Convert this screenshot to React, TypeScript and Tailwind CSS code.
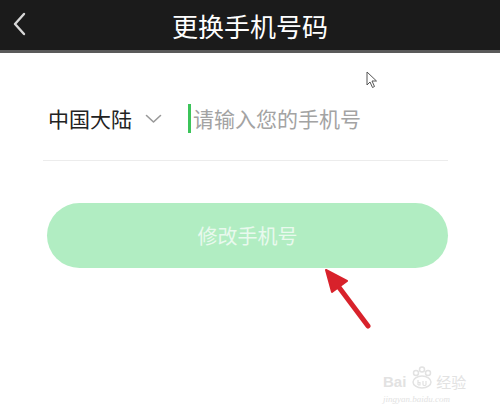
import React from "react"

const cjk = { fontFamily: '"Noto Sans CJK SC", "Noto Sans", sans-serif' }

function BackIcon() {
    return (
        <svg width="14" height="24" viewBox="0 0 14 24" fill="none">
            <path d="M12 2 L3 12 L12 22" stroke="#d8d8d8" strokeWidth="2.4" strokeLinecap="round" strokeLinejoin="round" />
        </svg>
    )
}

function Chevron() {
    return (
        <svg width="17" height="10" viewBox="0 0 17 10" fill="none">
            <path d="M1.5 1.5 L8.5 8 L15.5 1.5" stroke="#999" strokeWidth="1.6" strokeLinecap="round" strokeLinejoin="round" />
        </svg>
    )
}

function MousePointer() {
    return (
        <svg width="12" height="18" viewBox="0 0 12 18" fill="none">
            <path d="M1 1 L1 14 L4 11 L6.5 16.5 L8.5 15.5 L6 10 L10.5 10 Z" fill="#fff" stroke="#555" strokeWidth="1" strokeLinejoin="round" />
        </svg>
    )
}

function RedArrow() {
    return (
        <svg width="60" height="70" viewBox="0 0 60 70" fill="none">
            <line x1="13" y1="14" x2="46" y2="58" stroke="#d8222b" strokeWidth="5" strokeLinecap="round" />
            <path d="M4 2 L25 13 L10 24 Z" fill="#d8222b" stroke="#d8222b" strokeWidth="2" strokeLinejoin="round" />
        </svg>
    )
}

// faint baidu watermark, bottom right
function Watermark() {
    return (
        <div className="absolute left-[383px] top-[366px] w-[88px] flex flex-col text-[#e2e2e2] select-none">
            <div className="flex items-end h-[23px]">
                <span className="text-[15px] font-bold leading-none" style={{ fontFamily: '"Liberation Sans", sans-serif' }}>Bai</span>
                <svg width="26" height="23" viewBox="0 0 26 23" className="ml-[3px]">
                    <circle cx="7" cy="7" r="2.5" fill="none" stroke="#e2e2e2" strokeWidth="1.5" />
                    <circle cx="13" cy="3.5" r="2.5" fill="none" stroke="#e2e2e2" strokeWidth="1.5" />
                    <circle cx="19" cy="7" r="2.5" fill="none" stroke="#e2e2e2" strokeWidth="1.5" />
                    <ellipse cx="13" cy="16" rx="9" ry="6" fill="none" stroke="#e2e2e2" strokeWidth="1.5" />
                    <path d="M9 14 v5 M9 16.5 h2 v2.5 h-2 M14 15 v3.5 q0 1 1.5 1 q1.5 0 1.5 -1 v-3.5" fill="none" stroke="#e2e2e2" strokeWidth="1.2" />
                </svg>
                <span className="ml-[1px] text-[15px] leading-none" style={cjk}>经验</span>
            </div>
            <span className="mt-[6px] text-[9px] italic leading-none" style={{ fontFamily: '"Liberation Serif", serif' }}>jingyan.baidu.com</span>
        </div>
    )
}

export default function App() {
    return (
        <div className="relative w-[500px] h-[417px] bg-white overflow-hidden" style={cjk}>
            <div className="h-[53px] bg-[#1b1b1b] border-b-[3px] border-[#5a5a5a] flex items-center relative">
                <div className="absolute left-[12px] top-[12px]">
                    <BackIcon />
                </div>
                <div className="w-full text-center text-white text-[26px] leading-none pt-[2px]">更换手机号码</div>
            </div>

            <div className="pt-[50px] pl-[48px] flex items-center h-[30px] box-content">
                <span className="text-[21px] leading-none text-[#222]">中国大陆</span>
                <span className="ml-[13px] mt-[2px]"><Chevron /></span>
                <span className="ml-[26px] w-[3px] h-[29px] bg-[#3cc45a]" />
                <span className="ml-[2px] text-[21px] leading-none text-[#a3a3a3]">请输入您的手机号</span>
            </div>

            <div className="mt-[27px] ml-[43px] mr-[52px] border-b border-[#ececec]" />

            <button className="mt-[42px] ml-[47px] w-[401px] h-[65px] rounded-full bg-[#b1edc2] text-[#e9f9ee] text-[20px] flex items-center justify-center">
                修改手机号
            </button>

            <div className="absolute left-[366px] top-[71px]">
                <MousePointer />
            </div>
            <div className="absolute left-[322px] top-[268px]">
                <RedArrow />
            </div>
            <Watermark />
        </div>
    )
}
